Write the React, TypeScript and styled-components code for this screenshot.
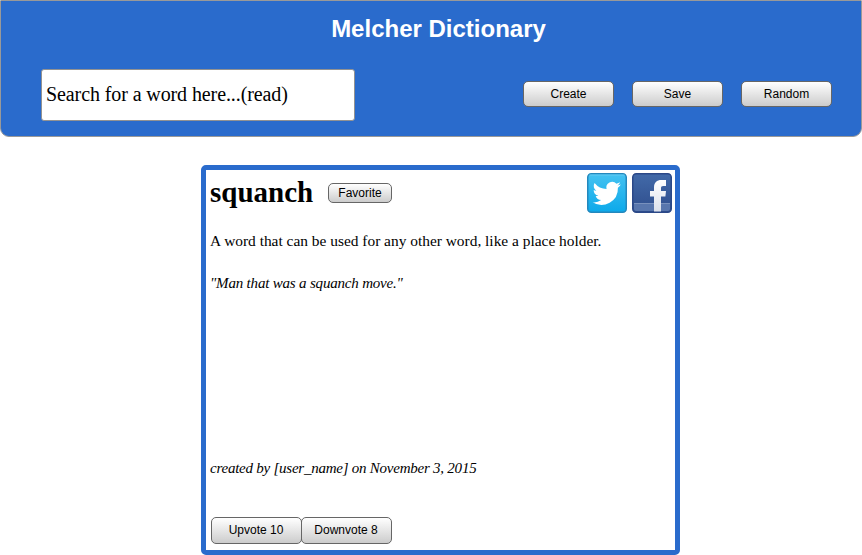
import React from 'react';
import styled, { createGlobalStyle } from 'styled-components';

const serif = '"Liberation Serif", "Times New Roman", serif';
const sans = '"Liberation Sans", Arial, sans-serif';
const blue = '#2a6bcc';

const GlobalStyle = createGlobalStyle`
  * { box-sizing: border-box; }
  body { margin: 0; background: #fff; color: #000; overflow: hidden; }
`;

const Page = styled.div`
  width: 862px;
  height: 555px;
  display: flex;
  flex-direction: column;
  align-items: center;
`;

const Header = styled.header`
  width: 100%;
  height: 137px;
  flex: none;
  padding: 14px 29px 0 40px;
  background: ${blue};
  border: 1px solid #999;
  border-radius: 1px 1px 9px 9px;
`;

const Title = styled.h1`
  margin: 0 0 26px 4px;
  font: bold 24px/28px ${sans};
  text-align: center;
  color: #fff;
`;

const Toolbar = styled.div`
  display: flex;
  justify-content: space-between;
  align-items: flex-start;
`;

const SearchInput = styled.input`
  width: 314px;
  height: 52px;
  padding: 0 4px 2px;
  border: 1px solid #929292;
  border-radius: 3px;
  background: #fff;
  color: #000;
  font: 20px ${serif};
  letter-spacing: -0.1px;
  outline: none;
`;

const Actions = styled.div`
  display: flex;
  gap: 18px;
  padding-top: 12px;
`;

const Button = styled.button<{ $small?: boolean }>`
  width: ${(p) => (p.$small ? 64 : 91)}px;
  height: ${(p) => (p.$small ? 20 : 26)}px;
  padding: 0 0 1px;
  border: 1px solid #666;
  border-radius: 5px;
  background: linear-gradient(#fff, #ccc);
  color: #000;
  font: 12px/16px ${sans};
  white-space: nowrap;
`;

const Card = styled.article`
  width: 479px;
  height: 390px;
  margin: 28px 0 0 19px;
  padding: 3px 3px 6px 4px;
  border: 5px solid ${blue};
  border-radius: 5px;
  display: flex;
  flex-direction: column;
`;

const CardHeader = styled.div`
  display: flex;
  align-items: center;
  height: 40px;
`;

const Word = styled.h2`
  width: 118px;
  margin: 0;
  padding-bottom: 2px;
  font: bold 29px/36px ${serif};
`;

const Share = styled.div`
  display: flex;
  gap: 5px;
  margin-left: auto;
  svg { display: block; }
`;

const Definition = styled.p`
  margin: 18px 0 0;
  font: 15.42px/20px ${serif};
`;

const Example = styled.p`
  margin: 22px 0 0;
  font: italic 15px/20px ${serif};
  letter-spacing: -0.19px;
`;

const Credit = styled(Example)`
  margin-top: 165px;
  letter-spacing: -0.24px;
`;

const Votes = styled.div`
  display: flex;
  margin: auto 0 0 1px;
  ${Button} { height: 27px; padding: 0 1px 2px 0; }
  ${Button} + ${Button} { margin-left: -1px; }
`;

const TwitterIcon = () => (
  <svg width="40" height="40" viewBox="0 0 40 40">
    <defs>
      <linearGradient id="tw" x2="0" y2="1">
        <stop stopColor="#45c2f1" />
        <stop offset="1" stopColor="#0ca9ea" />
      </linearGradient>
    </defs>
    <rect x=".75" y=".75" width="38.5" height="38.5" rx="3.5" fill="url(#tw)" stroke="#2488bd" strokeWidth="1.5" />
    <path d="M2.5 2h35" stroke="#62cbf3" />
    <path
      transform="translate(6 5.8) scale(1.18)"
      fill="#fff"
      d="M23.6 4.9a9.7 9.7 0 0 1-2.8.8 4.9 4.9 0 0 0 2.2-2.7 9.9 9.9 0 0 1-3.1 1.2 4.9 4.9 0 0 0-8.4 4.5A14 14 0 0 1 1.3 3.5a4.9 4.9 0 0 0 1.5 6.6 4.9 4.9 0 0 1-2.2-.6 4.9 4.9 0 0 0 3.9 4.9 4.9 4.9 0 0 1-2.2.1 4.9 4.9 0 0 0 4.6 3.4A9.9 9.9 0 0 1-.4 19.9a14 14 0 0 0 21.5-12.4 10 10 0 0 0 2.5-2.6z"
    />
  </svg>
);

const FacebookIcon = () => (
  <svg width="40" height="40" viewBox="0 0 40 40">
    <defs>
      <linearGradient id="fb" x2="0" y2="1">
        <stop stopColor="#426aa9" />
        <stop offset="1" stopColor="#2f4d8c" />
      </linearGradient>
      <linearGradient id="fl" x2="0" y2="1">
        <stop stopColor="#fff" />
        <stop offset="1" stopColor="#dce1eb" />
      </linearGradient>
    </defs>
    <rect x=".75" y=".75" width="38.5" height="38.5" rx="3.5" fill="url(#fb)" stroke="#2b4888" strokeWidth="1.5" />
    <path d="M2 30h36v6q0 2-2 2H4q-2 0-2-2z" fill="#5876ad" />
    <path d="M2 30.5h36" stroke="#7890bd" />
    <path
      d="M22 38.5V23.5h-4v-5.5H22v-3.4c0-5 2.7-7.6 7.5-7.6H34v6h-2.7c-1.7 0-2.3.8-2.3 2.2v2.8h5l-.6 5.5H29v15z"
      fill="url(#fl)"
    />
  </svg>
);

export default function App() {
  return (
    <Page>
      <GlobalStyle />
      <Header>
        <Title>Melcher Dictionary</Title>
        <Toolbar>
          <SearchInput defaultValue="Search for a word here...(read)" aria-label="Search" />
          <Actions>
            <Button>Create</Button>
            <Button>Save</Button>
            <Button>Random</Button>
          </Actions>
        </Toolbar>
      </Header>
      <Card>
        <CardHeader>
          <Word>squanch</Word>
          <Button $small>Favorite</Button>
          <Share>
            <TwitterIcon />
            <FacebookIcon />
          </Share>
        </CardHeader>
        <Definition>A word that can be used for any other word, like a place holder.</Definition>
        <Example>"Man that was a squanch move."</Example>
        <Credit>created by [user_name] on November 3, 2015</Credit>
        <Votes>
          <Button>Upvote 10</Button>
          <Button>Downvote 8</Button>
        </Votes>
      </Card>
    </Page>
  );
}
